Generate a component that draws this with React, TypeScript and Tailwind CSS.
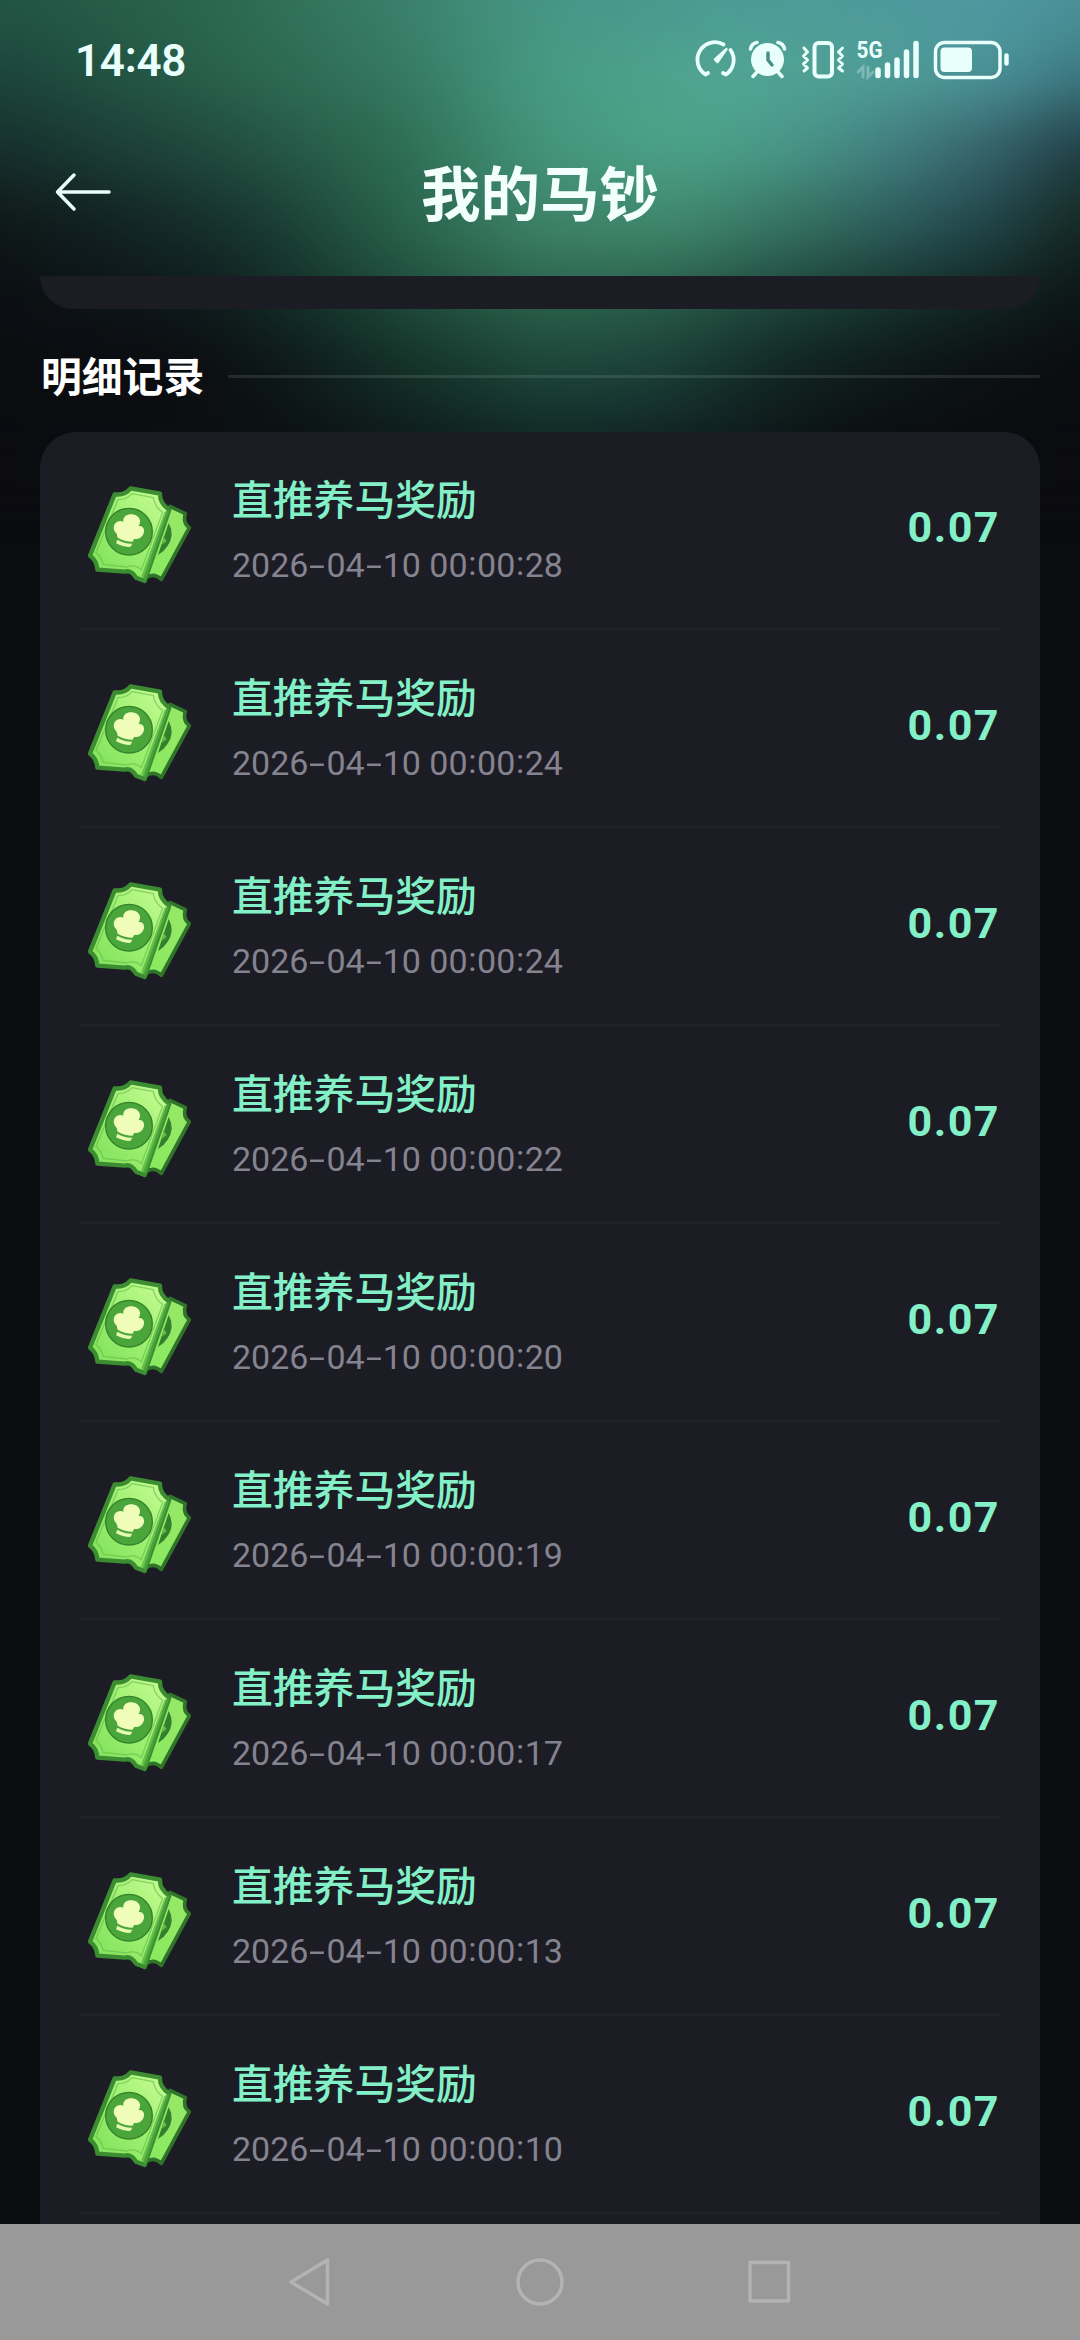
const records = [
  '2026-04-10 00:00:28',
  '2026-04-10 00:00:24',
  '2026-04-10 00:00:24',
  '2026-04-10 00:00:22',
  '2026-04-10 00:00:20',
  '2026-04-10 00:00:19',
  '2026-04-10 00:00:17',
  '2026-04-10 00:00:13',
  '2026-04-10 00:00:10'
];

// horizontal bands of the header glow, top to bottom, blurred into each other
const glowBands = [
  'h-[140px] bg-[linear-gradient(90deg,#23574a_0px,#225444_80px,#2a654d_280px,#3a806a_480px,#469685_620px,#4c9c95_830px,#4e98a0_1080px,#478a92_1240px)]',
  'h-[70px] bg-[linear-gradient(90deg,#1b4439_80px,#285f4a_280px,#357861_480px,#479a82_620px,#52a693_800px,#4f9d98_980px,#4b9298_1080px,#3c7880_1160px)]',
  'h-[75px] bg-[linear-gradient(90deg,#162f2d_80px,#20493c_280px,#2d6c54_480px,#43957a_620px,#4ca388_760px,#489588_880px,#417c7e_980px,#345f69_1080px,#203d45_1160px)]',
  'h-[75px] bg-[linear-gradient(90deg,#0e1717_80px,#122425_210px,#183830_340px,#28624b_480px,#3e8469_620px,#40886e_760px,#35705f_880px,#2c5a5c_980px,#1f4246_1080px,#14271f_1160px)]',
  'h-[70px] bg-[linear-gradient(90deg,#0b0e12_80px,#0e1a1c_280px,#133028_380px,#1e4a3b_480px,#2c634d_620px,#2a5f4b_730px,#1c4339_880px,#122a26_1030px,#0c1415_1160px)]',
  'h-[70px] bg-[linear-gradient(90deg,#0b0c10_80px,#0b0c10_260px,#0d1717_360px,#133027_480px,#1d473a_620px,#1c4238_730px,#10231f_880px,#0c1213_1030px,#0b0c10_1160px)]',
  'h-[70px] bg-[linear-gradient(90deg,#0b0c10_80px,#0c1213_380px,#122d27_620px,#12282a_730px,#0b1011_930px,#0b0c10_1160px)]'
];

const TicketIcon = () =>
<svg width="140" height="140" viewBox="0 0 420 420" className="shrink-0">
    <defs>
      <linearGradient id="front" x1="0" y1="1" x2="1" y2="0">
        <stop offset="0" stopColor="#7cdf58" />
        <stop offset="0.5" stopColor="#9df070" />
        <stop offset="1" stopColor="#ccfd98" />
      </linearGradient>
      <linearGradient id="back" x1="0" y1="1" x2="1" y2="0">
        <stop offset="0" stopColor="#86ea5d" />
        <stop offset="1" stopColor="#98e868" />
      </linearGradient>
    </defs>
    <path d="M300 136L346 158Q338 186 358 200L274 355Q252 334 228 350L190 330Z" fill="url(#back)" stroke="#2f7429" strokeWidth="11" strokeLinejoin="round" />
    <path d="M296 186Q316 222 292 256Q282 272 264 282Z" fill="#327f2c" />
    <path d="M280 226L290 240L276 252Z" fill="#63b94a" />
    <path d="M182 82L270 98Q268 126 298 146L224 360L198 350Q184 326 164 332L82 326Q80 298 60 284L134 100Q164 104 182 82Z" fill="url(#front)" stroke="#3c8d31" strokeWidth="13" strokeLinejoin="round" />
    <path d="M298 148L226 358L214 346L284 152Z" fill="#4fae3d" opacity="0.7" />
    <path d="M186 98L250 110Q254 138 278 154L214 326Q196 308 170 318L100 310Q92 284 78 274L144 116Q170 116 186 98Z" fill="none" stroke="#62ba46" strokeWidth="4" opacity="0.6" />
    <circle cx="177" cy="212" r="70" fill="#4aa53b" stroke="#348329" strokeWidth="4" />
    <path d="M143 230Q142 218 134 211C124 190 144 174 160 182C156 154 204 152 210 178C211 186 208 190 206 195C232 192 226 238 192 234L188 242Q164 242 143 230Z" fill="#effdb9" />
    <path d="M142 236Q164 249 187 248L181 258Q158 258 138 247Z" fill="#e4fbb0" />
  </svg>;


const StatusIcons = () =>
<svg width="350" height="80" viewBox="0 0 350 80" fill="none" stroke="#e9fffb" strokeLinecap="round">
    <path d="M28 53L25.500 54.500A17.500 17.500 0 0 1 43.500 24.500M50.500 30A17.500 17.500 0 0 1 46 54.500L43 53" strokeWidth="3.800" strokeLinejoin="round" />
    <path d="M46.500 29L37.500 42L35 39.500Z" fill="#e9fffb" strokeWidth="2.500" strokeLinejoin="round" />
    <circle cx="87.500" cy="39.500" r="16.500" fill="#e9fffb" stroke="none" />
    <path d="M70.500 29Q71.500 23.500 77 22.500M98 22.500Q103.500 23.500 104.500 29" strokeWidth="3.500" />
    <path d="M77 52L73 56.500M98 52L102 56.500" strokeWidth="3.500" />
    <path d="M88 33V40L92 45" stroke="#4a8f86" strokeWidth="3.500" />
    <rect x="134.500" y="23" width="17.500" height="33.500" rx="4" strokeWidth="4" />
    <path d="M124 28L127.500 32L123.500 36L127.500 40L123.500 44L127.500 48L124 51M162.500 28L158.500 32L162.500 36L158.500 40L162.500 44L158.500 48L162.500 51" strokeWidth="3" strokeLinejoin="round" />
    <path d="M198 50V55.500M207.500 45V55.500M217 40V55.500M226.500 32V55.500M236 23.500V55.500" strokeWidth="5.500" />
    <path d="M183 57V47L178 52M188 47V57L193 52" strokeWidth="3" opacity="0.3" />
    <text x="176.500" y="37.500" fill="#e9fffb" stroke="none" fontSize="23" fontWeight="700" fontFamily="Roboto, sans-serif" textLength="26" lengthAdjust="spacingAndGlyphs">5G</text>
    <rect x="255.500" y="22.500" width="64.500" height="35" rx="9" strokeWidth="3.500" />
    <rect x="260.500" y="27.500" width="31.500" height="24.500" rx="4" fill="#e9fffb" stroke="none" />
    <path d="M326.500 35.500V43.500" strokeWidth="4.500" />
  </svg>;


const DateText = ({ value }: {value: string;}) =>
<p className="flex h-[34px] items-center whitespace-pre text-[34px] leading-[34px] font-normal text-[#85838f]">
    {value.split(/([-:])/).map((part, i) =>
  part === '-' ?
  <span key={i} className="w-[18px] scale-x-[1.7] text-center">-</span> :
  part === ':' ?
  <span key={i} className="w-[9.500px] -translate-y-[2px] text-center">:</span> :
  <span key={i}>{part}</span>
  )}
  </p>;


const App = () => {
  return (
    <div className="relative flex h-[2340px] w-[1080px] flex-col overflow-hidden bg-[#0b0c10] font-[Roboto,'Noto_Sans_CJK_SC',sans-serif]">
      <div className="absolute -inset-x-20 -top-[100px] blur-[30px]">
        {glowBands.map((band, i) =>
        <div key={i} className={band} />
        )}
      </div>

      <header className="relative h-[276px]">
        <div className="flex h-[116px] items-start justify-between pr-[50px] pl-[75px]">
          <p className="flex pt-[39px] text-[44px] leading-[45px] font-semibold tracking-[-0.300px] text-[#e9fffb]">
            14<span className="-translate-y-[4px]">:</span>48
          </p>
          <div className="pt-5">
            <StatusIcons />
          </div>
        </div>
        <div className="flex h-[152px] items-center">
          <svg width="180" height="60" viewBox="0 0 180 60" fill="none" stroke="#eafffa" strokeWidth="3.500" strokeLinecap="round" strokeLinejoin="round">
            <path d="M74 13L57.500 30L74 47M58 30H109" />
          </svg>
          <h1 className="flex-1 pt-2 pr-[180px] text-center text-[59.500px] leading-[76px] font-bold text-[#f2fffc]">我的马钞</h1>
        </div>
      </header>

      <main className="relative flex h-[1948px] flex-col overflow-hidden px-10">
        <div className="h-[33px] shrink-0 rounded-b-[36px] bg-[#1c1c24]" />
        <div className="flex h-[123px] shrink-0 items-center gap-6 pt-3 pl-px">
          <h2 className="pt-0.5 text-[40.800px] leading-[60px] font-bold text-white">明细记录</h2>
          <div className="h-[3px] flex-1 bg-white/10" />
        </div>

        <ul className="shrink-0 rounded-t-[36px] bg-[#1c1c24]">
          {records.map((time, i) =>
          <li key={i} className="px-10">
              <div className="flex h-[198px] items-center border-b-2 border-[#22222b]">
                <div className="-ml-[10px] pt-0.5">
                  <TicketIcon />
                </div>
                <div className="ml-[22px] flex-1 pb-0.5">
                  <p className="mb-[22px] text-[40.800px] leading-[50px] font-medium text-[#83f0c8]">直推养马奖励</p>
                  <DateText value={time} />
                </div>
                <span className="mb-1.5 text-[43px] font-bold tracking-[1.500px] text-[#83f0c8]">0.07</span>
              </div>
            </li>
          )}
          <li className="h-[198px]" />
        </ul>
      </main>

      <nav className="relative flex h-[116px] items-center justify-center bg-[#999]">
        <svg width="540" height="60" viewBox="0 0 540 60" fill="none" stroke="#b3b3b3" strokeWidth="3.500" strokeLinejoin="round">
          <path d="M57.500 8V52L21 30Z" />
          <circle cx="270" cy="30" r="22" />
          <rect x="480" y="10.500" width="38.500" height="38.500" />
        </svg>
      </nav>
    </div>);

};

export default App;
